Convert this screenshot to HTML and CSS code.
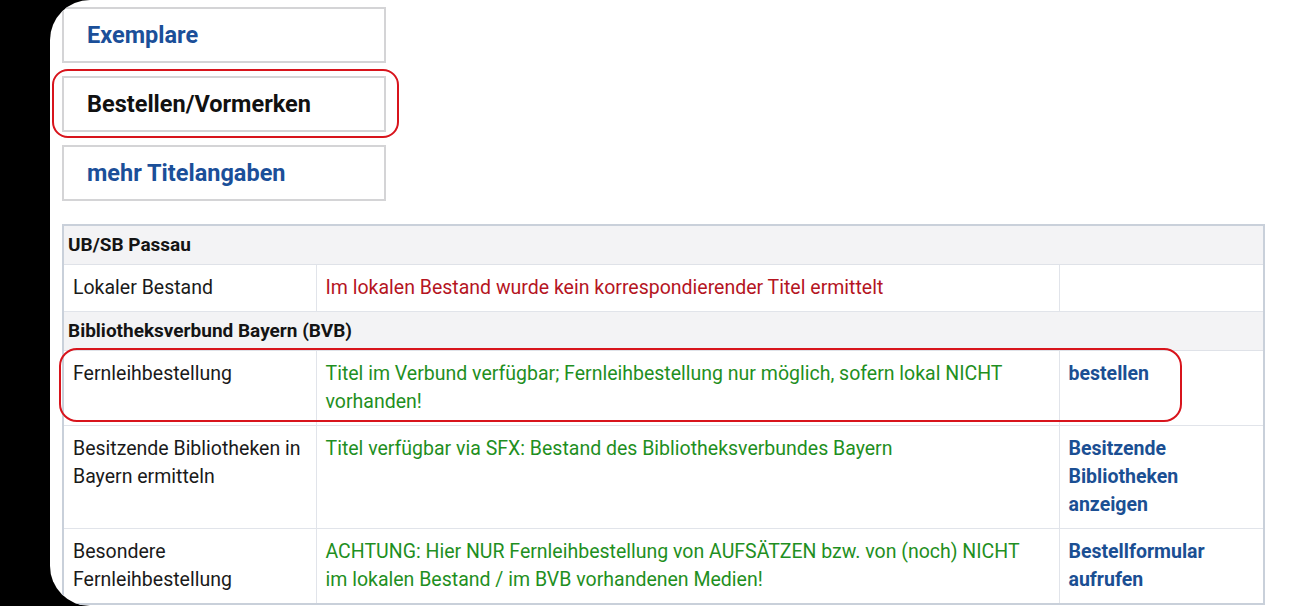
FILE: index.html
```html
<!DOCTYPE html>
<html lang="de">
<head>
<meta charset="utf-8">
<title>Bestellen/Vormerken</title>
<link rel="stylesheet" href="styles.css">
</head>
<body>
<div class="panel">
  <nav class="tabs">
    <a class="tab">Exemplare</a>
    <a class="tab tab-active">Bestellen/Vormerken<span class="mark mark-tab"></span></a>
    <a class="tab">mehr Titelangaben</a>
  </nav>
  <table class="holdings">
    <colgroup>
      <col class="c1"><col class="c2"><col class="c3">
    </colgroup>
    <tr class="group"><th colspan="3">UB/SB Passau</th></tr>
    <tr>
      <td>Lokaler Bestand</td>
      <td class="red">Im lokalen Bestand wurde kein korrespondierender Titel ermittelt</td>
      <td></td>
    </tr>
    <tr class="group"><th colspan="3">Bibliotheksverbund Bayern (BVB)</th></tr>
    <tr class="marked">
      <td class="first">Fernleihbestellung<span class="mark mark-row"></span></td>
      <td class="green">Titel im Verbund verfügbar; Fernleihbestellung nur möglich, sofern lokal NICHT vorhanden!</td>
      <td><a class="link">bestellen</a></td>
    </tr>
    <tr>
      <td>Besitzende Bibliotheken in Bayern ermitteln</td>
      <td class="green">Titel verfügbar via SFX: Bestand des Bibliotheksverbundes Bayern</td>
      <td><a class="link">Besitzende Bibliotheken anzeigen</a></td>
    </tr>
    <tr>
      <td>Besondere Fernleihbestellung</td>
      <td class="green">ACHTUNG: Hier NUR Fernleihbestellung von AUFSÄTZEN bzw. von (noch) NICHT im lokalen Bestand / im BVB vorhandenen Medien!</td>
      <td><a class="link">Bestellformular aufrufen</a></td>
    </tr>
  </table>
</div>
</body>
</html>
```
FILE: styles.css
```css
html, body {
  margin: 0;
  padding: 0;
  background: #000;
  height: 606px;
  overflow: hidden;
}
body {
  font-family: Roboto, "Liberation Sans", sans-serif;
}
.panel {
  margin-left: 50px;
  height: 606px;
  background: #fff;
  border-radius: 40px 0 0 40px;
  padding: 7px 0 0 12px;
  box-sizing: border-box;
  overflow: hidden;
}
.tabs {
  display: flex;
  flex-direction: column;
  gap: 13px;
  width: 324px;
}
.tab {
  position: relative;
  display: block;
  height: 56px;
  box-sizing: border-box;
  border: 2px solid #d4d4d6;
  padding: 0 0 0 23px;
  line-height: 52px;
  font-size: 23.5px;
  font-weight: 700;
  color: #1b4f99;
}
.tab-active {
  color: #111;
}
.mark {
  position: absolute;
  border: 2.5px solid #d8141c;
  box-sizing: border-box;
  pointer-events: none;
}
.mark-tab {
  left: -12px;
  top: -9px;
  width: 347px;
  height: 69px;
  border-radius: 16px;
}
.holdings {
  margin-top: 23px;
  width: 1201px;
  border-collapse: collapse;
  table-layout: fixed;
  border: 2px solid #c9d0da;
  font-size: 19.5px;
  line-height: 28px;
}
.c1 { width: 253px; }
.c2 { width: 743px; }
.c3 { width: 205px; }
.holdings th {
  text-align: left;
  background: #f3f3f5;
  font-size: 19px;
  font-weight: 700;
  color: #141414;
  padding: 9px 4px 9px;
  line-height: 20px;
  border: 1px solid #dfe2e8;
}
.holdings td {
  vertical-align: top;
  padding: 9px 9px;
  border: 1px solid #e1e4ea;
  color: #1a1a1a;
}
.holdings td.green, .holdings td.red {
  padding-right: 14px;
}
.red { color: #b5151f !important; }
.green { color: #1f8f22 !important; }
.link {
  color: #1b4f93;
  font-weight: 700;
}
.first {
  position: relative;
}
.mark-row {
  left: -5px;
  top: -3px;
  width: 1123px;
  height: 74px;
  border-radius: 18px;
}
```
